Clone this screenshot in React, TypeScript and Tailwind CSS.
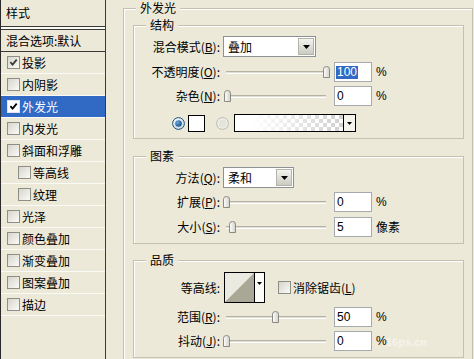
import React from "react";

const cjk = "font-['Noto_Sans_CJK_SC','Noto_Sans',sans-serif]";
const num = "font-['Liberation_Sans',Arial,sans-serif]";

function CheckBox({ checked = false, light = false }: { checked?: boolean; light?: boolean }) {
  return (
    <span
      className={
        light
          ? "flex-none inline-flex items-center justify-center w-[13px] h-[13px] border border-[#dfe6f2] bg-white"
          : "flex-none inline-flex items-center justify-center w-[13px] h-[13px] border border-[#8f8e86] bg-linear-to-br from-[#d6d5cc] to-[#fbfbf8]"
      }
    >
      {checked && (
        <svg width="9" height="9" viewBox="0 0 9 9">
          <path d="M1.4 4.2 L3.6 6.6 L7.7 1.7" fill="none" stroke={light ? "#000" : "#3a3a3a"} strokeWidth="1.8" />
        </svg>
      )}
    </span>
  );
}

const items: { t: string; c?: boolean; sel?: boolean; sub?: boolean }[] = [
  { t: "投影", c: true },
  { t: "内阴影" },
  { t: "外发光", c: true, sel: true },
  { t: "内发光" },
  { t: "斜面和浮雕" },
  { t: "等高线", sub: true },
  { t: "纹理", sub: true },
  { t: "光泽" },
  { t: "颜色叠加" },
  { t: "渐变叠加" },
  { t: "图案叠加" },
  { t: "描边" },
];

function Label({ text, k }: { text: string; k?: string }) {
  return (
    <div className="w-[86px] flex-none text-right leading-[16px] whitespace-nowrap">
      {text}
      {k ? (
        <>
          (<span className="underline">{k}</span>)
        </>
      ) : null}
      :
    </div>
  );
}

function NumBox({ v, sel = false }: { v: string; sel?: boolean }) {
  return (
    <div className={`ml-[4px] w-[38px] h-[20px] flex-none border border-[#a7abb0] bg-white flex items-center pl-[1px] ${num} text-[12px]`}>
      <span className={sel ? "px-[1px] leading-[13px] bg-[#316ac5] text-white" : "px-[1px] leading-[13px]"}>{v}</span>
    </div>
  );
}

function Thumb() {
  return (
    <svg width="7" height="12" viewBox="0 0 7 12">
      <defs>
        <linearGradient id="thg" x1="0" x2="1" y1="0" y2="0">
          <stop offset="0" stopColor="#ffffff" />
          <stop offset="1" stopColor="#d2d1c8" />
        </linearGradient>
      </defs>
      <path d="M0.5 11.5 V3.2 Q0.5 0.5 3.5 0.5 Q6.5 0.5 6.5 3.2 V11.5 Z" fill="url(#thg)" stroke="#8a8980" />
    </svg>
  );
}

function Slider({ x }: { x: number }) {
  return (
    <div className="relative w-[107px] h-[14px] flex-none ml-[3px]">
      <div className="absolute left-[3px] right-[4px] top-[6px] h-[3px] border-t border-[#b4b2a4] border-b border-b-white bg-[#e2e0d4]" />
      <div className="absolute top-[1px] w-[7px] h-[12px] flex" style={{ left: x }}>
        <Thumb />
      </div>
    </div>
  );
}

function Arrow() {
  return (
    <svg width="7" height="4" viewBox="0 0 7 4">
      <path d="M0 0 H7 L3.5 4 Z" fill="#000" />
    </svg>
  );
}

function Select({ text, w }: { text: string; w: string }) {
  return (
    <div className={`ml-[3px] flex items-center h-[21px] ${w} flex-none border border-[#8c9196] bg-white`}>
      <span className="pl-[4px] flex-1 leading-[16px]">{text}</span>
      <span className="flex-none w-[16px] h-[17px] mr-[1px] flex items-center justify-center border border-[#b4b3a8] bg-linear-to-b from-[#f4f4f0] to-[#cccbc2]">
        <Arrow />
      </span>
    </div>
  );
}

function Group({ title, className, children }: { title: string; className: string; children: React.ReactNode }) {
  return (
    <fieldset className={`border border-[#c4c1b0] p-0 m-0 min-w-0 shadow-[inset_1px_1px_0_#ffffff] ${className}`}>
      <legend className="ml-[12px] px-[4px] leading-[16px] bg-[#ece9d8]">{title}</legend>
      {children}
    </fieldset>
  );
}

function Radio({ on }: { on: boolean }) {
  return on ? (
    <svg width="13" height="13" viewBox="0 0 13 13" className="flex-none">
      <defs>
        <radialGradient id="rb" cx="0.4" cy="0.35" r="0.7">
          <stop offset="0" stopColor="#ffffff" />
          <stop offset="1" stopColor="#c5d3e3" />
        </radialGradient>
        <radialGradient id="rdot" cx="0.35" cy="0.35" r="0.7">
          <stop offset="0" stopColor="#6aa8de" />
          <stop offset="1" stopColor="#1b4d85" />
        </radialGradient>
      </defs>
      <circle cx="6.5" cy="6.5" r="5.9" fill="url(#rb)" stroke="#1c5180" />
      <circle cx="6.5" cy="6.5" r="3.3" fill="url(#rdot)" />
    </svg>
  ) : (
    <svg width="13" height="13" viewBox="0 0 13 13" className="flex-none">
      <circle cx="6.5" cy="6.5" r="5.9" fill="#f1f0ea" stroke="#b9b8b0" />
      <circle cx="6.5" cy="6.5" r="4" fill="#e4e3dc" />
    </svg>
  );
}

export default function App() {
  return (
    <div className={`relative flex w-[474px] h-[359px] overflow-hidden bg-[#ece9d8] text-black text-[12px] ${cjk}`}>
      {/* left list */}
      <div className="w-[106px] h-full flex-none border-l border-r border-l-[#2a2a2a] border-r-[#3a3a3a] flex flex-col">
        <div className="h-[27px] flex-none border-b border-[#3a3a3a] flex items-center pl-[5px] leading-[16px]">样式</div>
        <div className="h-[2px] flex-none bg-[#fbfbf6]" />
        <div className="h-[23px] flex-none border-y border-[#3a3a3a] flex items-center pl-[5px] leading-[16px] whitespace-nowrap">
          混合选项:默认
        </div>
        {items.map((it) => (
          <div
            key={it.t}
            className={`h-[22px] flex-none border-b border-[#fbfbf6] flex items-center gap-[2px] leading-[16px] whitespace-nowrap ${
              it.sub ? "pl-[17px]" : "pl-[6px]"
            } ${it.sel ? "bg-[#316ac5] text-white" : ""}`}
          >
            <CheckBox checked={!!it.c} light={!!it.sel} />
            <span>{it.t}</span>
          </div>
        ))}
      </div>

      {/* right panel */}
      <div className="flex-1 pl-[17px] pr-[1px]">
        <fieldset className="border border-[#c4c1b0] p-0 m-0 w-[350px] min-w-0 shadow-[inset_1px_1px_0_#ffffff]">
          <legend className="ml-[12px] px-[4px] leading-[16px] bg-[#ece9d8]">外发光</legend>
          <div className="pl-[9px] pr-[8px] pb-[12px]">
            <Group title="结构" className="mt-[1px]">
              <div className="pt-[3px] pb-[6px] flex flex-col">
                <div className="h-[21px] flex items-center">
                  <Label text="混合模式" k="B" />
                  <Select text="叠加" w="w-[93px]" />
                </div>
                <div className="h-[20px] mt-[5px] flex items-center">
                  <Label text="不透明度" k="O" />
                  <Slider x={100} />
                  <NumBox v="100" sel />
                  <span className={`ml-[4px] ${num} text-[12px]`}>%</span>
                </div>
                <div className="h-[20px] mt-[4px] flex items-center">
                  <Label text="杂色" k="N" />
                  <Slider x={1} />
                  <NumBox v="0" />
                  <span className={`ml-[4px] ${num} text-[12px]`}>%</span>
                </div>
                <div className="h-[18px] mt-[8px] flex items-center pl-[38px]">
                  <Radio on />
                  <div className="ml-[3px] w-[17px] h-[17px] flex-none border border-black bg-white" />
                  <div className="ml-[11px] flex">
                    <Radio on={false} />
                  </div>
                  <div className="ml-[5px] w-[122px] h-[18px] flex-none border border-black flex bg-white">
                    <svg width="108" height="16" className="flex-none">
                      <defs>
                        <pattern id="chk" width="8" height="8" patternUnits="userSpaceOnUse">
                          <rect width="8" height="8" fill="#ffffff" />
                          <rect width="4" height="4" fill="#d0d0d0" />
                          <rect x="4" y="4" width="4" height="4" fill="#d0d0d0" />
                        </pattern>
                        <linearGradient id="fade" x1="0" x2="1" y1="0" y2="0">
                          <stop offset="0" stopColor="#ffffff" stopOpacity="1" />
                          <stop offset="0.15" stopColor="#ffffff" stopOpacity="1" />
                          <stop offset="1" stopColor="#ffffff" stopOpacity="0" />
                        </linearGradient>
                      </defs>
                      <rect width="108" height="16" fill="url(#chk)" />
                      <rect width="108" height="16" fill="url(#fade)" />
                    </svg>
                    <div className="flex-1 border-l border-black flex items-center justify-center bg-[#f4f3ee]">
                      <svg width="5" height="3" viewBox="0 0 5 3">
                        <path d="M0 0 H5 L2.5 3 Z" fill="#000" />
                      </svg>
                    </div>
                  </div>
                </div>
              </div>
            </Group>

            <Group title="图素" className="mt-[9px]">
              <div className="pt-[3px] pb-[6px] flex flex-col">
                <div className="h-[21px] flex items-center">
                  <Label text="方法" k="Q" />
                  <Select text="柔和" w="w-[71px]" />
                </div>
                <div className="h-[20px] mt-[4px] flex items-center">
                  <Label text="扩展" k="P" />
                  <Slider x={0} />
                  <NumBox v="0" />
                  <span className={`ml-[4px] ${num} text-[12px]`}>%</span>
                </div>
                <div className="h-[20px] mt-[5px] flex items-center">
                  <Label text="大小" k="S" />
                  <Slider x={6} />
                  <NumBox v="5" />
                  <span className="ml-[4px] leading-[16px]">像素</span>
                </div>
              </div>
            </Group>

            <Group title="品质" className="mt-[8px]">
              <div className="pt-[4px] pb-[6px] flex flex-col">
                <div className="h-[31px] flex items-center">
                  <Label text="等高线" />
                  <div className="ml-[4px] w-[41px] h-[31px] flex-none border border-black flex bg-white">
                    <svg width="29" height="29" className="flex-none">
                      <rect width="29" height="29" fill="#ebeae1" />
                      <polygon points="0,29 29,0 29,29" fill="#a9a795" />
                    </svg>
                    <div className="flex-1 border-l border-black flex justify-center pt-[9px] bg-[#fbfbf8]">
                      <svg width="5" height="3" viewBox="0 0 5 3">
                        <path d="M0 0 H5 L2.5 3 Z" fill="#000" />
                      </svg>
                    </div>
                  </div>
                  <div className="ml-[13px] flex items-center gap-[2px] whitespace-nowrap leading-[16px]">
                    <CheckBox />
                    <span>
                      消除锯齿(<span className="underline">L</span>)
                    </span>
                  </div>
                </div>
                <div className="h-[20px] mt-[4px] flex items-center">
                  <Label text="范围" k="R" />
                  <Slider x={49} />
                  <NumBox v="50" />
                  <span className={`ml-[4px] ${num} text-[12px]`}>%</span>
                </div>
                <div className="h-[20px] mt-[4px] flex items-center">
                  <Label text="抖动" k="J" />
                  <Slider x={0} />
                  <NumBox v="0" />
                  <span className={`ml-[4px] ${num} text-[12px]`}>%</span>
                </div>
              </div>
            </Group>
          </div>
        </fieldset>
      </div>

      <div className={`absolute left-[386px] top-[334px] text-[11px] font-bold text-white/50 ${num}`}>16ps.cn</div>
    </div>
  );
}
